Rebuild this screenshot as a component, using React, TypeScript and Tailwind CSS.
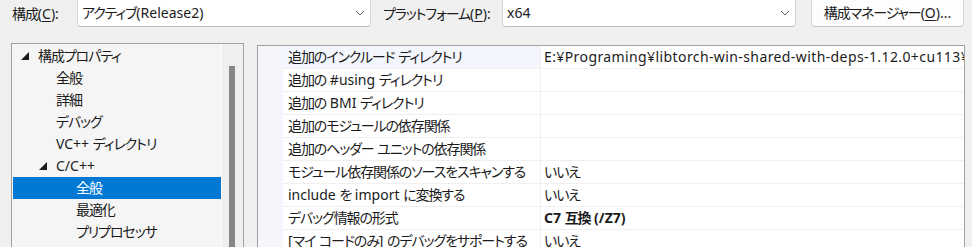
import React from "react";

const CJK = /([\u3000-\u30ff\u4e00-\u9fff\uff00-\uff9f]+)/;

function J({ text }: { text: string }) {
  const parts = text.split(CJK);
  return (
    <span className="whitespace-pre">
      {parts.map((p, i) =>
        p === "" ? null : CJK.test(p) ? (
          <span key={i} className="tracking-[-1.1px]">
            {p}
          </span>
        ) : (
          <span key={i}>{p}</span>
        )
      )}
    </span>
  );
}

const Chevron = () => (
  <svg width="10" height="6" viewBox="0 0 10 6" className="shrink-0">
    <path d="M1 1 L5 5 L9 1" fill="none" stroke="#606060" strokeWidth="1" />
  </svg>
);

const Tri = () => (
  <svg width="8" height="8" viewBox="0 0 8 8" className="shrink-0">
    <polygon points="8,0 8,8 0,8" fill="#1b1b1b" />
  </svg>
);

type TreeItem = { label: string; level: number; expanded?: boolean; selected?: boolean };

const tree: TreeItem[] = [
  { label: "構成プロパティ", level: 0, expanded: true },
  { label: "全般", level: 1 },
  { label: "詳細", level: 1 },
  { label: "デバッグ", level: 1 },
  { label: "VC++ ディレクトリ", level: 1 },
  { label: "C/C++", level: 1, expanded: true },
  { label: "全般", level: 2, selected: true },
  { label: "最適化", level: 2 },
  { label: "プリプロセッサ", level: 2 },
];

const rows: { name: string; value?: string; bold?: boolean; wide?: boolean }[] = [
  {
    name: "追加のインクルード ディレクトリ",
    value: "E:¥Programing¥libtorch-win-shared-with-deps-1.12.0+cu113¥libtorch¥include",
    wide: true,
  },
  { name: "追加の #using ディレクトリ" },
  { name: "追加の BMI ディレクトリ" },
  { name: "追加のモジュールの依存関係" },
  { name: "追加のヘッダー ユニットの依存関係" },
  { name: "モジュール依存関係のソースをスキャンする", value: "いいえ" },
  { name: "include を import に変換する", value: "いいえ" },
  { name: "デバッグ情報の形式", value: "C7 互換 (/Z7)", bold: true },
  { name: "[マイ コードのみ] のデバッグをサポートする", value: "いいえ" },
];

export default function App() {
  return (
    <div
      className="w-[972px] h-[247px] overflow-hidden bg-[#f0f0f0] text-[#1b1b1b] text-[14px] leading-none"
      style={{ fontFamily: '"Noto Sans", "Noto Sans CJK JP", sans-serif', fontFeatureSettings: '"palt" 1' }}
    >
      {/* top bar */}
      <div className="flex items-stretch h-[27px]">
        <div className="w-[77px] shrink-0 pl-[12px] flex items-center whitespace-nowrap">
          <J text="構成(" />
          <span className="underline underline-offset-2">C</span>):
        </div>
        <div className="w-[294px] shrink-0 bg-white border border-t-0 border-[#d4d4d4] border-b-[#bdbdbd] rounded-b-[4px] flex items-center pl-[4px] pr-[5px]">
          <span className="flex-1 whitespace-nowrap">
            <J text="アクティブ(Release2)" />
          </span>
          <Chevron />
        </div>
        <div className="w-[131px] shrink-0 pl-[12px] flex items-center whitespace-nowrap">
          <J text="プラットフォーム(" />
          <span className="underline underline-offset-2">P</span>):
        </div>
        <div className="w-[294px] shrink-0 bg-white border border-t-0 border-[#d4d4d4] border-b-[#bdbdbd] rounded-b-[4px] flex items-center pl-[4px] pr-[5px]">
          <span className="flex-1 whitespace-nowrap">x64</span>
          <Chevron />
        </div>
        <div className="w-[15px] shrink-0" />
        <div className="w-[153px] shrink-0 bg-[#fdfdfd] border border-t-0 border-[#d4d4d4] border-b-[#c2c2c2] rounded-b-[4px] flex items-center justify-center whitespace-nowrap">
          <J text="構成マネージャー(" />
          <span className="underline underline-offset-2">O</span>)...
        </div>
      </div>

      {/* main */}
      <div className="flex items-start mt-[16px]">
        {/* tree panel */}
        <div className="ml-[11px] shrink-0 w-[233px] h-[220px] border border-b-0 border-[#a0a0a0] bg-[#f5f5f5] flex overflow-hidden">
          <div className="w-[209px] shrink-0 pt-[1px] pl-[1px]">
            {tree.map((t, i) => (
              <div
                key={i}
                className={`h-[22px] flex items-center whitespace-nowrap ${t.selected ? "bg-[#0078d4] text-white" : ""}`}
              >
                <div
                  className={`w-[8px] shrink-0 ${
                    t.level === 0 ? "ml-[8px]" : t.level === 1 ? "ml-[26px]" : "ml-[46px]"
                  }`}
                >
                  {t.expanded ? <Tri /> : null}
                </div>
                <span className="ml-[9px]">
                  <J text={t.label} />
                </span>
              </div>
            ))}
          </div>
          <div className="w-[1px] shrink-0 bg-white" />
          <div className="w-[21px] shrink-0 bg-[#efefef] pt-[22px] pl-[7px]">
            <div className="w-[6px] h-[200px] bg-[#858585]" />
          </div>
        </div>

        {/* property grid */}
        <div className="ml-[13px] mt-[2px] shrink-0 w-[708px] h-[220px] border border-b-0 border-[#a0a0a0] bg-white flex overflow-hidden">
          <div className="w-[25px] shrink-0 bg-[#f4f6fb]" />
          <div className="flex-1 min-w-0">
            {rows.map((r, i) => (
              <div key={i} className="h-[23px] flex border-b border-[#f0f0f0]">
                <div
                  className={`w-[258px] shrink-0 pl-[5px] flex items-center whitespace-nowrap overflow-hidden border-r border-[#f0f0f0] ${
                    i === 0 ? "bg-[#f3f6fd]" : ""
                  }`}
                >
                  <J text={r.name} />
                </div>
                <div
                  className={`flex-1 min-w-0 pl-[3px] flex items-center whitespace-nowrap overflow-hidden ${
                    r.bold ? "font-bold" : ""
                  } ${r.wide ? "tracking-[0.4px]" : ""}`}
                >
                  <J text={r.value ?? ""} />
                </div>
              </div>
            ))}
          </div>
        </div>
      </div>
    </div>
  );
}
